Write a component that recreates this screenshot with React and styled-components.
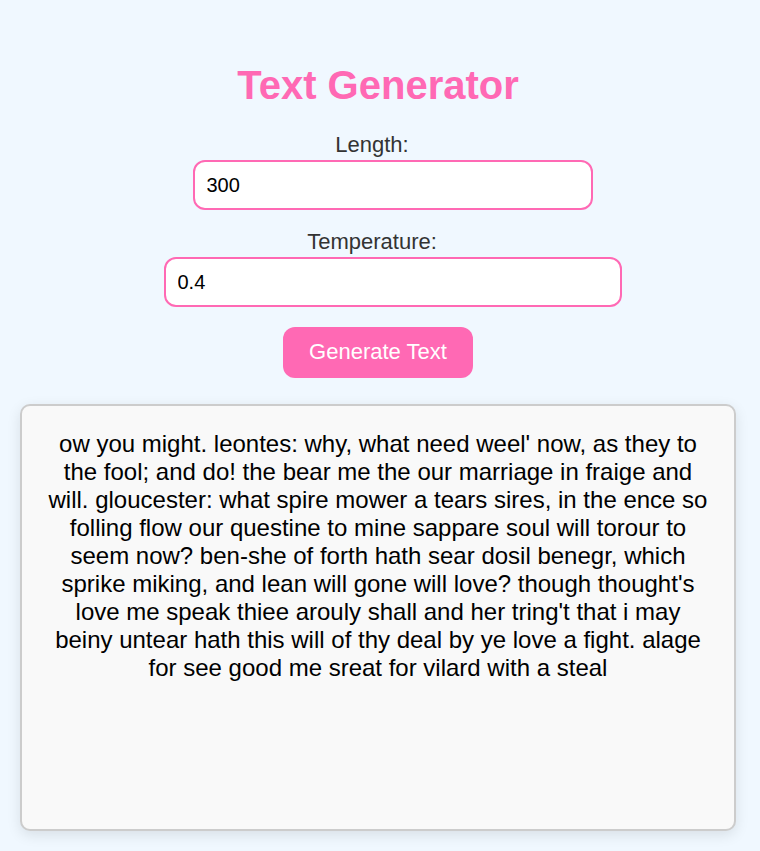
import React, { useState } from 'react'
import styled, { createGlobalStyle } from 'styled-components'

const GlobalStyle = createGlobalStyle`
	html, body {
		margin: 0;
		padding: 0;
		background-color: #f0f8ff;
		font-family: 'Liberation Sans', Arial, sans-serif;
	}
`

const Page = styled.div`
	display: flex;
	flex-direction: column;
	align-items: center;
	padding: 63px 24px 20px 20px;
	min-height: 851px;
	box-sizing: border-box;
`

const Title = styled.h1`
	margin: 0 0 24px;
	font-size: 40px;
	font-weight: bold;
	color: #ff69b4;
`

const Label = styled.label`
	display: block;
	margin-right: 12px;
	font-size: 22px;
	color: #333;
`

const Input = styled.input`
	box-sizing: border-box;
	width: ${(props) => props.w}px;
	height: 50px;
	margin: 2px 0 ${(props) => props.mb}px 29px;
	padding: 0 12px;
	font-family: inherit;
	font-size: 20px;
	color: #000;
	background: #fff;
	border: 2px solid #ff69b4;
	border-radius: 12px;
	outline: none;
`

const Button = styled.button`
	width: 190px;
	height: 51px;
	margin-bottom: 26px;
	padding-bottom: 2px;
	font-family: inherit;
	font-size: 22px;
	color: #fff;
	background-color: #ff69b4;
	border: none;
	border-radius: 12px;
	cursor: pointer;
`

const Output = styled.div`
	box-sizing: border-box;
	align-self: stretch;
	height: 427px;
	padding: 24px 24px;
	font-size: 24px;
	text-align: center;
	color: #000;
	background-color: #f9f9f9;
	border: 2px solid #ccc;
	border-radius: 10px;
	box-shadow: 0 4px 14px rgba(0, 0, 0, 0.1);
`

const sample =
	"ow you might. leontes: why, what need weel' now, as they to the fool; and do! the bear me the our marriage in fraige and will. gloucester: what spire mower a tears sires, in the ence so folling flow our questine to mine sappare soul will torour to seem now? ben-she of forth hath sear dosil benegr, which sprike miking, and lean will gone will love? though thought's love me speak thiee arouly shall and her tring't that i may beiny untear hath this will of thy deal by ye love a fight. alage for see good me sreat for vilard with a steal"

function App() {
	const [length, setLength] = useState('300')
	const [temp, setTemp] = useState('0.4')
	return (
		<>
			<GlobalStyle />
			<Page>
				<Title>Text Generator</Title>
				<Label htmlFor='len'>Length:</Label>
				<Input id='len' w={400} mb={19} value={length} onChange={(e) => setLength(e.target.value)} />
				<Label htmlFor='temp'>Temperature:</Label>
				<Input id='temp' w={458} mb={20} value={temp} onChange={(e) => setTemp(e.target.value)} />
				<Button>Generate Text</Button>
				<Output>{sample}</Output>
			</Page>
		</>
	)
}

export default App
